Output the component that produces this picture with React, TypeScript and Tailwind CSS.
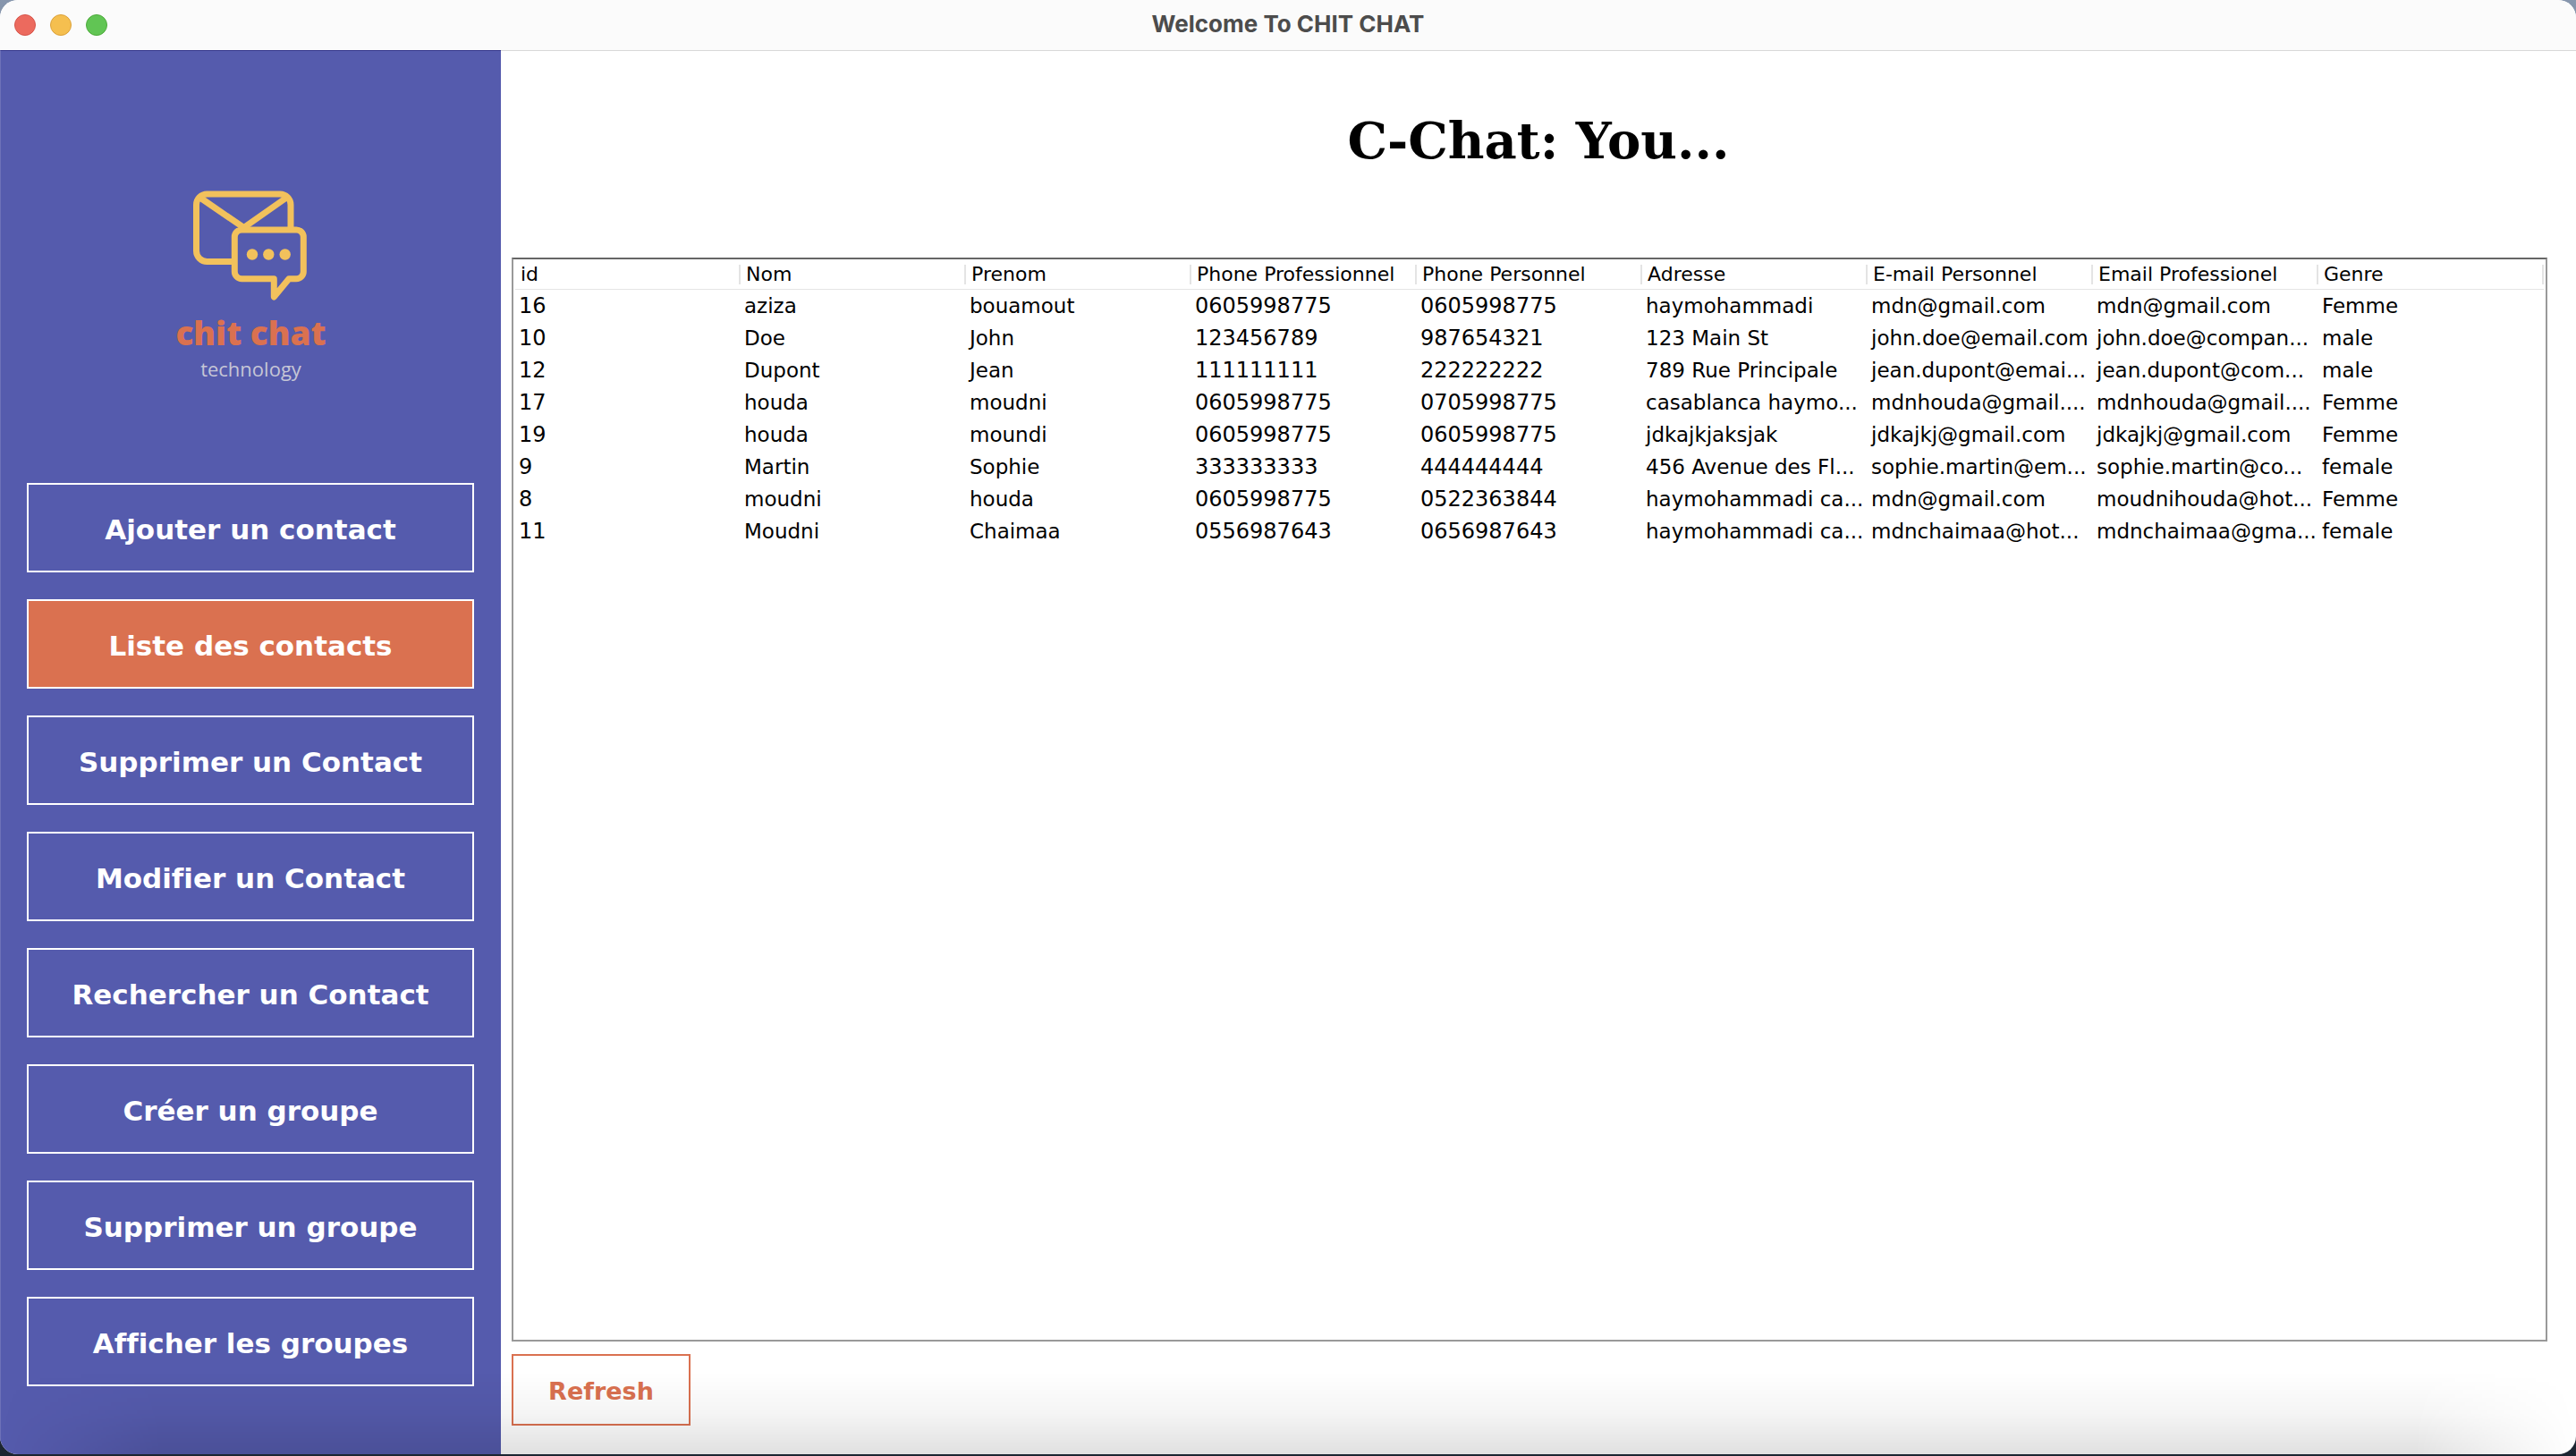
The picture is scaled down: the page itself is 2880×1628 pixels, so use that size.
const menu = [
  'Ajouter un contact',
  'Liste des contacts',
  'Supprimer un Contact',
  'Modifier un Contact',
  'Rechercher un Contact',
  'Créer un groupe',
  'Supprimer un groupe',
  'Afficher les groupes',
];

const columns = [
  { name: 'id', numeric: true },
  { name: 'Nom', numeric: false },
  { name: 'Prenom', numeric: false },
  { name: 'Phone Professionnel', numeric: true },
  { name: 'Phone Personnel', numeric: true },
  { name: 'Adresse', numeric: false },
  { name: 'E-mail Personnel', numeric: false },
  { name: 'Email Professionel', numeric: false },
  { name: 'Genre', numeric: false },
];

const rows = [
  ['16', 'aziza', 'bouamout', '0605998775', '0605998775', 'haymohammadi', 'mdn@gmail.com', 'mdn@gmail.com', 'Femme'],
  ['10', 'Doe', 'John', '123456789', '987654321', '123 Main St', 'john.doe@email.com', 'john.doe@compan...', 'male'],
  ['12', 'Dupont', 'Jean', '111111111', '222222222', '789 Rue Principale', 'jean.dupont@emai...', 'jean.dupont@com...', 'male'],
  ['17', 'houda', 'moudni', '0605998775', '0705998775', 'casablanca haymo...', 'mdnhouda@gmail....', 'mdnhouda@gmail....', 'Femme'],
  ['19', 'houda', 'moundi', '0605998775', '0605998775', 'jdkajkjaksjak', 'jdkajkj@gmail.com', 'jdkajkj@gmail.com', 'Femme'],
  ['9', 'Martin', 'Sophie', '333333333', '444444444', '456 Avenue des Fl...', 'sophie.martin@em...', 'sophie.martin@co...', 'female'],
  ['8', 'moudni', 'houda', '0605998775', '0522363844', 'haymohammadi ca...', 'mdn@gmail.com', 'moudnihouda@hot...', 'Femme'],
  ['11', 'Moudni', 'Chaimaa', '0556987643', '0656987643', 'haymohammadi ca...', 'mdnchaimaa@hot...', 'mdnchaimaa@gma...', 'female'],
];

function TitleBar() {
  return (
    <header className="grid h-14 shrink-0 grid-cols-[1fr_auto_1fr] items-center bg-[#fbfbfb] px-4">
      <div className="flex gap-4">
        <button type="button" aria-label="Close" className="size-6 rounded-full border border-[#d6554b] bg-[#ec6a5e]" />
        <button type="button" aria-label="Minimize" className="size-6 rounded-full border border-[#dba23c] bg-[#f5bf4f]" />
        <button type="button" aria-label="Zoom" className="size-6 rounded-full border border-[#4eaa3c] bg-[#61c554]" />
      </div>
      <span className="pb-0.5 font-[Inter,sans-serif] text-[26px] leading-8 font-bold text-[#4c4c4c]">
        Welcome To CHIT CHAT
      </span>
    </header>
  );
}

function Logo() {
  return (
    <div className="flex flex-col items-center font-['Open_Sans',sans-serif]">
      <svg width="130" height="123" viewBox="37 24 130 123" fill="none" stroke="#f2c15c" strokeWidth="7" strokeLinejoin="round">
        <path d="M146 68V40a12 12 0 0 0-12-12H52.500a12 12 0 0 0-12 12V91.500a12 12 0 0 0 12 12H83" />
        <path d="M44 31.500 93.500 65.500 142 31.500" />
        <path d="M91.300 68h61a8 8 0 0 1 8 8v38.700a8 8 0 0 1-8 8H144L127.300 143V122.700h-36a8 8 0 0 1-8-8V76a8 8 0 0 1 8-8z" />
        <g fill="#f2c15c" stroke="none">
          <circle cx="103" cy="95.500" r="6.200" />
          <circle cx="121.300" cy="95.500" r="6.200" />
          <circle cx="139.700" cy="95.500" r="6.200" />
        </g>
      </svg>
      <span className="mt-4 text-[37px] leading-10 font-extrabold text-[#da7150]">chit chat</span>
      <span className="mt-2 text-[22px] leading-6 text-[#c6c6d6]">technology</span>
    </div>
  );
}

function Sidebar() {
  return (
    <aside className="flex w-[560px] shrink-0 flex-col border-t border-l border-t-[#35378c] border-l-[#6d71b8] bg-[#555bad] pt-[156px] pb-[76px]">
      <Logo />
      <nav className="mt-[116px] mr-[30px] ml-[29px] flex flex-col gap-[30px] [font-variant-ligatures:none]">
        {menu.map((label) => (
          <button
            key={label}
            type="button"
            className={
              label === 'Liste des contacts'
                ? 'h-[100px] border-2 border-white bg-[#da7150] pt-1 text-[31px] font-bold text-white'
                : 'h-[100px] border-2 border-white pt-1 text-[31px] font-bold text-white'
            }
          >
            {label}
          </button>
        ))}
      </nav>
    </aside>
  );
}

function ContactTable() {
  return (
    <div className="flex-1 border-2 border-[#999999] border-t-[#666666] px-0.5">
      <table className="w-full table-fixed border-separate border-spacing-0 text-black [font-variant-ligatures:none]">
        <thead>
          <tr>
            {columns.map(({ name }) => (
              <th key={name} scope="col" className="border-b border-[#e4e4e4] pt-1.5 pb-[5px] text-left text-[22px] font-normal">
                <div className="border-r-2 border-[#e4e4e4] pl-1.5 leading-[22px] whitespace-nowrap">{name}</div>
              </th>
            ))}
          </tr>
        </thead>
        <tbody>
          {rows.map((row) => (
            <tr key={row[0]}>
              {row.map((cell, i) => (
                <td
                  key={columns[i].name}
                  className={
                    columns[i].numeric
                      ? 'h-9 p-0 pl-1 text-[24px] leading-9 whitespace-nowrap'
                      : 'h-9 p-0 pl-1 text-[23px] leading-9 whitespace-nowrap'
                  }
                >
                  {cell}
                </td>
              ))}
            </tr>
          ))}
        </tbody>
      </table>
    </div>
  );
}

export default function App() {
  return (
    <div className="flex min-h-screen bg-linear-to-b from-[#8796ad] via-[#3d4b5e] to-[#1c2531] pb-0.5 font-['DejaVu_Sans',Verdana,sans-serif]">
      <div className="relative flex flex-1 flex-col overflow-hidden rounded-[20px] bg-white">
        <TitleBar />
        <div className="flex flex-1">
          <Sidebar />
          <main className="flex flex-1 flex-col border-t border-[#d8d8d8] pb-8">
            <h1 className="pt-16 pb-[95px] text-center font-['DejaVu_Serif',Georgia,serif] text-[56px] leading-[72px] font-bold text-black">
              C-Chat: You...
            </h1>
            <section className="mr-8 ml-3 flex flex-1 flex-col gap-3.5">
              <ContactTable />
              <button type="button" className="h-20 w-[200px] border-2 border-[#da7150] pt-1 text-[27px] font-bold text-[#da7150]">
                Refresh
              </button>
            </section>
          </main>
        </div>
        <div className="pointer-events-none absolute inset-x-0 bottom-0 h-[92px] bg-linear-to-t from-black/12 via-black/4 to-transparent mask-[linear-gradient(to_right,transparent,black_180px,black_calc(100%-180px),transparent)]" />
      </div>
    </div>
  );
}
